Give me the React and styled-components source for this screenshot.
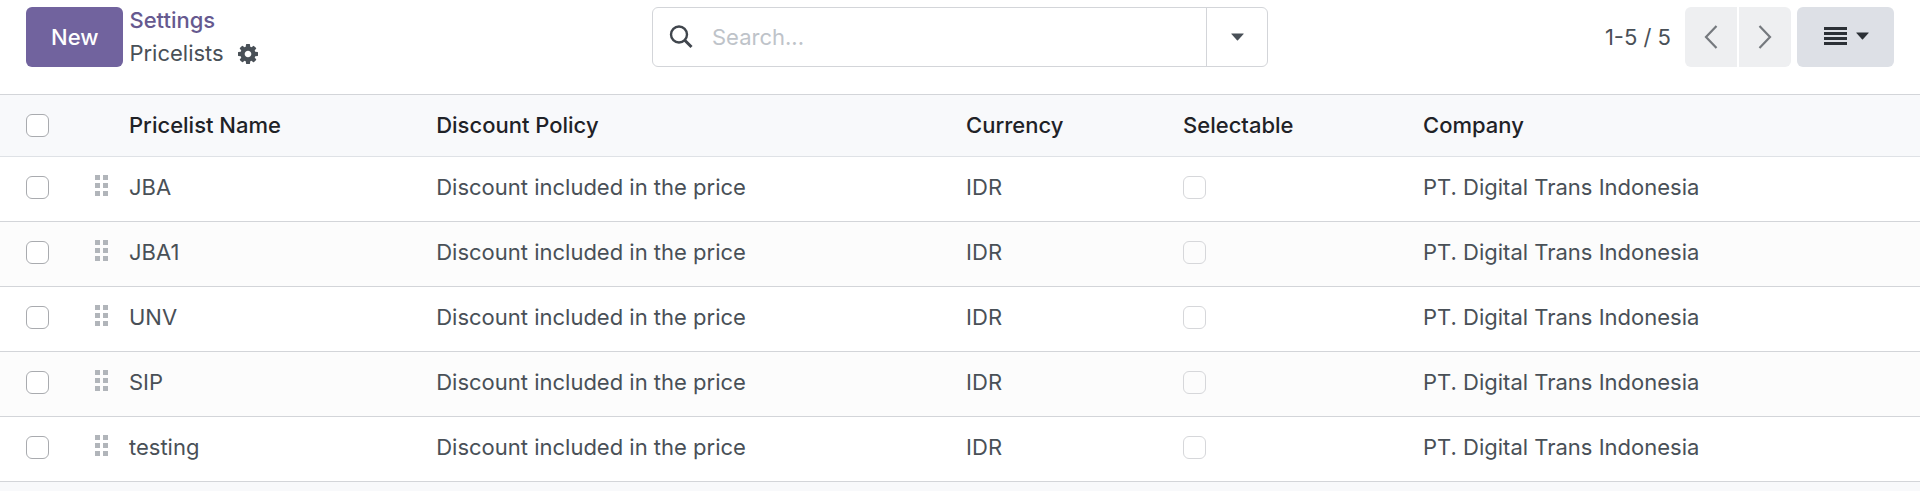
import React from 'react';
import styled, { createGlobalStyle } from 'styled-components';

const GlobalStyle = createGlobalStyle`
  *,
  *::before,
  *::after {
    box-sizing: border-box;
  }

  body {
    margin: 0;
    background-color: #f8f9fb;
    color: #495057;
    font-family: Inter, 'Liberation Sans', sans-serif;
    font-size: 22px;
    line-height: 33px;
  }

  button,
  input {
    font: inherit;
    color: inherit;
  }
`;

const ControlPanel = styled.header`
  display: grid;
  grid-template-columns: minmax(0, 1fr) minmax(0, 616px) minmax(0, 1fr);
  align-items: start;
  padding: 7px 26px 27px;
  background-color: white;
`;

const PanelStart = styled.div`
  display: flex;
  align-items: center;
  gap: 6px;
  height: 60px;
`;

const PrimaryButton = styled.button`
  height: 60px;
  padding: 0 25px;
  border: none;
  border-radius: 6px;
  background-color: #71639e;
  color: white;
  font-weight: 500;
`;

const Breadcrumb = styled.nav`
  display: flex;
  flex-direction: column;
`;

const BreadcrumbLink = styled.a`
  color: #66598f;
  font-weight: 500;
  text-decoration: none;
`;

const Current = styled.span`
  display: flex;
  align-items: center;
  gap: 14px;
`;

const IconButton = styled.button`
  display: flex;
  padding: 0;
  border: none;
  background: none;
`;

const SearchBar = styled.div`
  display: flex;
  align-items: center;
  height: 60px;
  border: 1px solid #d3d5d9;
  border-radius: 6px;

  > svg {
    flex: none;
    margin-left: 16px;
  }
`;

const SearchInput = styled.input`
  flex: 1;
  min-width: 0;
  height: 100%;
  padding: 0 19px;
  border: none;
  outline: none;
  background: none;

  &::placeholder {
    color: #bec3c9;
    opacity: 1;
  }
`;

const SearchToggle = styled.button`
  display: flex;
  align-items: center;
  justify-content: center;
  width: 61px;
  height: 100%;
  padding: 0;
  border: none;
  border-left: 1px solid #d3d5d9;
  background: none;
`;

const PanelEnd = styled.div`
  display: flex;
  align-items: center;
  justify-content: flex-end;
`;

const PagerButtons = styled.div`
  display: flex;
  gap: 2px;
  margin: 0 6px 0 14px;
`;

const PagerButton = styled.button`
  display: flex;
  align-items: center;
  justify-content: center;
  width: 52px;
  height: 60px;
  padding: 0;
  border: none;
  border-radius: ${({ $side }) =>
    $side === 'left' ? '6px 0 0 6px' : '0 6px 6px 0'};
  background-color: #eeeff1;
`;

const ViewButton = styled.button`
  display: flex;
  align-items: center;
  justify-content: center;
  gap: 9px;
  width: 97px;
  height: 60px;
  padding: 0 0 3px 2px;
  border: none;
  border-radius: 6px;
  background-color: #dde0e6;
`;

const Table = styled.table`
  width: 100%;
  border-collapse: separate;
  border-spacing: 0;
  border-top: 1px solid #d3d5d9;
  table-layout: fixed;
`;

const Col = styled.col`
  width: ${({ $width }) => $width};
`;

const HeadCell = styled.th`
  height: 62px;
  padding: 0 6px;
  border-bottom: 1px solid #dfe2e6;
  background-color: #f8f9fb;
  color: #1f2227;
  font-weight: 500;
  text-align: left;

  &:first-child {
    padding-left: 26px;
  }
`;

const Row = styled.tr`
  background-color: ${({ $striped }) => ($striped ? '#fcfcfc' : 'white')};
`;

const Cell = styled.td`
  height: 65px;
  padding: 14px 6px 17px;
  border-bottom: 1px solid #d3d5d9;
  white-space: nowrap;

  &:first-child {
    padding-left: 26px;
  }

  > svg {
    display: block;
  }
`;

const Checkbox = styled.input.attrs({ type: 'checkbox' })`
  display: block;
  appearance: none;
  width: 23px;
  height: 23px;
  margin: 0;
  border: 1px solid #a9abaf;
  border-radius: 6px;
  background-color: white;

  &:checked {
    background-color: #71639e;
  }

  &:disabled {
    border-color: #d6d7da;
    background-color: transparent;
  }
`;

const GearIcon = () => (
  <svg width="20" height="20" viewBox="128 128 1536 1536" fill="#495057">
    <path d="M1152 896q0-106-75-181t-181-75-181 75-75 181 75 181 181 75 181-75 75-181zm512-109v222q0 12-8 23t-20 13l-185 28q-19 54-39 91 35 50 107 138 10 12 10 25t-9 23q-27 37-99 108t-94 71q-12 0-26-9l-138-108q-44 23-91 38-16 136-29 186-7 28-36 28h-222q-14 0-24.5-8.5t-11.5-21.5l-28-184q-49-16-90-37l-141 107q-10 9-25 9-14 0-25-11-126-114-165-168-7-10-7-23 0-12 8-23 15-21 51-66.5t54-70.5q-27-50-41-99l-183-27q-13-2-21-12.5t-8-23.5v-222q0-12 8-23t19-13l186-28q14-46 39-92-40-57-107-138-10-12-10-24 0-10 9-23 26-36 98.5-107.5t94.5-71.5q13 0 26 10l138 107q44-23 91-38 16-136 29-186 7-28 36-28h222q14 0 24.5 8.5t11.5 21.5l28 184q49 16 90 37l142-107q9-9 24-9 13 0 25 10 129 119 165 170 7 8 7 22 0 12-8 23-15 21-51 66.5t-54 70.5q26 50 41 98l183 28q13 2 21 12.5t8 23.5z" />
  </svg>
);

const SearchIcon = () => (
  <svg width="24" height="24" viewBox="0 0 24 24" fill="none" stroke="#40464d">
    <circle cx="10" cy="9.5" r="8" strokeWidth="2.4" />
    <path d="M15.5 15l7 7" strokeWidth="3" />
  </svg>
);

const CaretIcon = ({ color = '#495057' }) => (
  <svg width="13" height="8" viewBox="0 0 13 8" fill={color}>
    <path d="M0.6 0.5h11.8q0.6 0 0.2 0.5L7 7.2q-0.5 0.5-1 0L0.4 1q-0.4-0.5 0.2-0.5z" />
  </svg>
);

const ChevronIcon = ({ points }) => (
  <svg
    width="14"
    height="24"
    viewBox="0 0 14 24"
    fill="none"
    stroke="#75797e"
    strokeWidth="2.2"
  >
    <polyline points={points} />
  </svg>
);

const ListIcon = () => (
  <svg width="23" height="18" viewBox="0 0 23 18" fill="#2b3036">
    <path d="M0 0h23v3H0zM0 5h23v3H0zM0 10h23v3H0zM0 15h23v3H0z" />
  </svg>
);

const DragHandle = () => (
  <svg width="15" height="26" viewBox="-1 0 15 26" fill="#b1b5ba">
    <path d="M0 0h5v5H0zM8 0h5v5H8zM0 8h5v5H0zM8 8h5v5H8zM0 16h5v5H0zM8 16h5v5H8z" />
  </svg>
);

const columns = [
  'Pricelist Name',
  'Discount Policy',
  'Currency',
  'Selectable',
  'Company',
];

const pricelists = ['JBA', 'JBA1', 'UNV', 'SIP', 'testing'].map(name => ({
  name,
  policy: 'Discount included in the price',
  currency: 'IDR',
  company: 'PT. Digital Trans Indonesia',
}));

const PricelistRow = ({ item, striped }) => (
  <Row $striped={striped}>
    <Cell>
      <Checkbox aria-label={`Select ${item.name}`} />
    </Cell>
    <Cell>
      <DragHandle />
    </Cell>
    <Cell>{item.name}</Cell>
    <Cell>{item.policy}</Cell>
    <Cell>{item.currency}</Cell>
    <Cell>
      <Checkbox disabled aria-label={`${item.name} selectable`} />
    </Cell>
    <Cell>{item.company}</Cell>
  </Row>
);

const App = () => (
  <>
    <GlobalStyle />
    <ControlPanel>
      <PanelStart>
        <PrimaryButton type="button">New</PrimaryButton>
        <Breadcrumb aria-label="Breadcrumb">
          <BreadcrumbLink href="#settings">Settings</BreadcrumbLink>
          <Current>
            Pricelists
            <IconButton type="button" aria-label="Actions">
              <GearIcon />
            </IconButton>
          </Current>
        </Breadcrumb>
      </PanelStart>
      <SearchBar role="search">
        <SearchIcon />
        <SearchInput
          type="text"
          placeholder="Search..."
          aria-label="Search"
        />
        <SearchToggle type="button" aria-label="Search options">
          <CaretIcon />
        </SearchToggle>
      </SearchBar>
      <PanelEnd>
        <span>1-5 / 5</span>
        <PagerButtons>
          <PagerButton type="button" $side="left" aria-label="Previous">
            <ChevronIcon points="12.5,1 2,12 12.5,23" />
          </PagerButton>
          <PagerButton type="button" $side="right" aria-label="Next">
            <ChevronIcon points="1.5,1 12,12 1.5,23" />
          </PagerButton>
        </PagerButtons>
        <ViewButton type="button" aria-label="List view">
          <ListIcon />
          <CaretIcon color="#2b3036" />
        </ViewButton>
      </PanelEnd>
    </ControlPanel>
    <Table>
      <colgroup>
        <Col $width="88px" />
        <Col $width="35px" />
        <Col $width="16%" />
        <Col $width="27.6%" />
        <Col $width="11.3%" />
        <Col $width="12.5%" />
        <Col />
      </colgroup>
      <thead>
        <tr>
          <HeadCell>
            <Checkbox aria-label="Select all" />
          </HeadCell>
          <HeadCell />
          {columns.map(label => (
            <HeadCell key={label}>{label}</HeadCell>
          ))}
        </tr>
      </thead>
      <tbody>
        {pricelists.map((item, index) => (
          <PricelistRow
            key={item.name}
            item={item}
            striped={index % 2 === 1}
          />
        ))}
      </tbody>
    </Table>
  </>
);

export default App;
